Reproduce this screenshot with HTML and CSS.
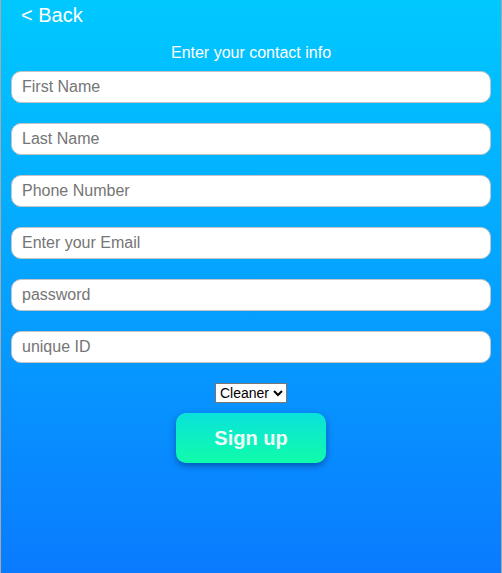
FILE: index.html
```html
<!DOCTYPE html>
<html>
<head>
<meta charset="utf-8">
<link rel="stylesheet" href="styles.css">
</head>
<body>
<div class="page">
  <div class="back">&lt; Back</div>
  <div class="title">Enter your contact info</div>
  <form class="form">
    <input class="field" type="text" placeholder="First Name">
    <input class="field" type="text" placeholder="Last Name">
    <input class="field" type="text" placeholder="Phone Number">
    <input class="field" type="text" placeholder="Enter your Email">
    <input class="field" type="text" placeholder="password">
    <input class="field" type="text" placeholder="unique ID">
    <select class="role"><option>Cleaner</option></select>
    <button class="signup" type="button">Sign up</button>
  </form>
</div>
</body>
</html>
```
FILE: styles.css
```css
html, body { margin: 0; padding: 0; }
body { font-family: "Liberation Sans", Arial, sans-serif; }
.page {
  box-sizing: border-box;
  width: 502px;
  height: 573px;
  border-left: 1px solid #a8a8a8;
  border-right: 1px solid #a8a8a8;
  background: linear-gradient(to bottom, #00c9ff 0%, #0a7bff 100%);
  display: flex;
  flex-direction: column;
}
.back {
  color: #fff;
  font-size: 20px;
  line-height: 23px;
  padding: 4px 0 0 20px;
}
.title {
  color: #fff;
  font-size: 16px;
  line-height: 18px;
  text-align: center;
  margin-top: 17px;
}
.form {
  display: flex;
  flex-direction: column;
  align-items: center;
  margin-top: 9px;
}
.field {
  box-sizing: border-box;
  width: 480px;
  height: 32px;
  margin: 0 0 20px 0;
  border: 1px solid #c4c4c4;
  border-radius: 10px;
  background: #fff;
  padding: 0 10px;
  font-family: "Liberation Sans", Arial, sans-serif;
  font-size: 16px;
  color: #333;
  outline: none;
}
.field::placeholder { color: #757575; }
.role {
  font-family: "Liberation Sans", Arial, sans-serif;
  font-size: 14px;
  height: 20px;
  margin: 0 0 10px 0;
  background: #fff;
  border: 1px solid #767676;
  border-radius: 0;
  color: #000;
}
.signup {
  width: 150px;
  height: 50px;
  border: none;
  border-radius: 10px;
  background: linear-gradient(to bottom, #0ae2db 0%, #10fca9 100%);
  box-shadow: 0 3px 6px rgba(0, 40, 110, 0.5);
  color: #eefaf6;
  font-family: "Liberation Sans", Arial, sans-serif;
  font-weight: bold;
  font-size: 20px;
}
```
